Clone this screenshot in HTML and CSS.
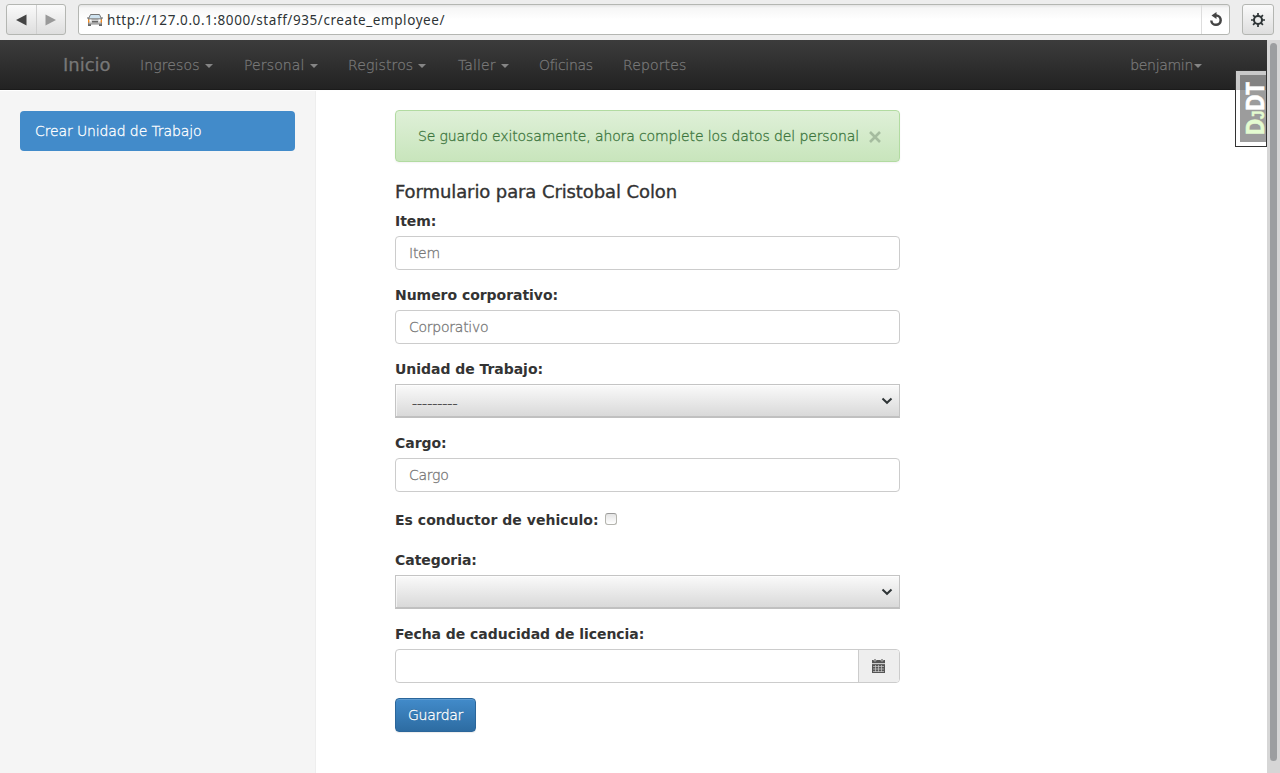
FILE: index.html
```html
<!DOCTYPE html>
<html lang="es">
<head>
<meta charset="utf-8">
<title>Crear empleado</title>
<link rel="stylesheet" href="styles.css">
</head>
<body>
<header class="toolbar">
  <div class="history">
    <span class="hist-btn"><svg width="14" height="14" viewBox="0 0 14 14"><path d="M12.500 1.500v11L2 7z" fill="#444"/></svg></span>
    <span class="hist-btn next"><svg width="14" height="14" viewBox="0 0 14 14"><path d="M1.500 1.500v11L12 7z" fill="#999"/></svg></span>
  </div>
  <div class="address">
    <svg class="car" width="16" height="14" viewBox="0 0 16 14"><path d="M3.500 1.500h9L14.500 6H1.500z" fill="#cfe3f0" stroke="#777"/><path d="M0 4.500h2v1H0zM14 4.500h2v1h-2zM1 10h3v3H1zM12 10h3v3h-3z" fill="#666"/><path d="M1.500 6h13v5h-13z" fill="#ccc" stroke="#888"/><path d="M5 8h6v1.500H5z" fill="#666"/><path d="M1 6.500h1.500v3H1zM13.500 6.500H15v3h-1.500z" fill="#f58b1e"/><path d="M2.500 6.500H4.500v2H2.500zM11.500 6.500h2v2h-2z" fill="#fff"/></svg>
    <span class="url">http://127.0.0.1:8000/staff/935/create_employee/</span>
    <span class="reload"><svg width="14" height="15" viewBox="0 0 14 15"><path d="M6 3.500H7.500a4.700 4.700 0 1 1-5.200 5" fill="none" stroke="#444" stroke-width="2.500"/><path d="M7.500 0v7L2.500 3.500z" fill="#444"/></svg></span>
  </div>
  <div class="gear"><svg width="14" height="14" viewBox="0 0 14 14"><circle cx="7" cy="7" r="4" fill="none" stroke="#2e3436" stroke-width="2"/><path d="M7 0v3M7 11v3M0 7h3M11 7h3M2.050 2.050l2 2M9.950 9.950l2 2M2.050 11.950l2-2M9.950 4.050l2-2" stroke="#2e3436" stroke-width="1.700"/></svg></div>
</header>
<div class="viewport">
  <div class="page">
    <nav class="navbar">
      <a class="brand">Inicio</a>
      <a class="nav-item wide"><span class="loose">Ingresos</span><i class="caret"></i></a>
      <a class="nav-item wide"><span class="loose">Personal</span><i class="caret"></i></a>
      <a class="nav-item wider"><span class="loose">Registros</span><i class="caret"></i></a>
      <a class="nav-item small"><span class="loose">Taller</span><i class="caret"></i></a>
      <a class="nav-item office"><span class="narrow">Oficinas</span></a>
      <a class="nav-item"><span class="loose">Reportes</span></a>
      <a class="nav-item user"><span class="narrow">benjamin</span><i class="caret tight"></i></a>
    </nav>
    <div class="columns">
      <aside class="sidebar"><a class="side-link"><span>Crear Unidad de Trabajo</span></a></aside>
      <main class="main">
        <div class="alert"><span class="alert-text">Se guardo exitosamente, ahora complete los datos del personal</span><svg class="close" width="12" height="12" viewBox="0 0 12 12"><path d="M1 1l10 10M11 1L1 11" stroke="#a5bc9f" stroke-width="2.600"/></svg></div>
        <h4 class="title">Formulario para Cristobal Colon</h4>
        <div class="group"><label>Item:</label><div class="control">Item</div></div>
        <div class="group"><label>Numero corporativo:</label><div class="control">Corporativo</div></div>
        <div class="group"><label>Unidad de Trabajo:</label><div class="select"><span class="dashes">---------</span><svg class="chev" width="12" height="8" viewBox="0 0 12 8"><path d="M1.500 1.500L6 5.800l4.500-4.300" fill="none" stroke="#2e3436" stroke-width="2"/></svg></div></div>
        <div class="group"><label>Cargo:</label><div class="control">Cargo</div></div>
        <div class="check-row"><label>Es conductor de vehiculo:</label><span class="checkbox"></span></div>
        <div class="group"><label>Categoria:</label><div class="select"><span class="dashes"></span><svg class="chev" width="12" height="8" viewBox="0 0 12 8"><path d="M1.500 1.500L6 5.800l4.500-4.300" fill="none" stroke="#2e3436" stroke-width="2"/></svg></div></div>
        <div class="group"><label>Fecha de caducidad de licencia:</label><div class="control date"><span class="addon"><svg width="13" height="14" viewBox="0 0 13 14"><path d="M0 1h13v3.500H0zM0 5h13v9H0z" fill="#555"/><path d="M2 0h2v2H2zM9 0h2v2H9z" fill="#555" stroke="#eee" stroke-width=".5"/><path d="M1 7.500h11M1 10h11M1 12.500h11M3.500 6v7M6.500 6v7M9.500 6v7" stroke="#ccc" stroke-width=".7"/><path d="M0 4.700h13" stroke="#eee" stroke-width=".7"/></svg></span></div></div>
        <button class="save">Guardar</button>
      </main>
    </div>
    <div class="djdt"><div class="djdt-panel"><span class="djdt-text"><span class="dj">D<small>J</small></span>DT</span></div></div>
  </div>
  <div class="scrollbar"><div class="thumb"></div></div>
</div>
</body>
</html>
```
FILE: styles.css
```css
* { box-sizing: border-box; }
body { margin: 0; height: 773px; overflow: hidden; background: #fff; color: #333; font: 200 14px/20px "DejaVu Sans Light", "DejaVu Sans", sans-serif; letter-spacing: -.12px; -webkit-text-stroke: .3px; }
svg { display: block; flex: none; }
.toolbar { height: 40px; background: #ededed; display: flex; padding: 4px 6px 5px; -webkit-text-stroke: 0; }
.history { width: 60px; height: 31px; border: 1px solid #b4b6b2; border-radius: 3px; background: linear-gradient(#fafafa, #dedede); display: flex; }
.hist-btn { flex: 1; display: flex; align-items: center; justify-content: center; }
.hist-btn.next { border-left: 1px solid #d0d0d0; }
.address { margin-left: 12px; width: 1152px; height: 31px; border: 1px solid #b4b6b2; border-radius: 3px; background: linear-gradient(#e4e4e4, #f6f6f6 3px, #fff 50%); display: flex; align-items: center; padding-left: 8px; }
.url { margin-left: 4px; font: 400 13.5px/20px "Noto Sans", sans-serif; letter-spacing: .57px; color: #2e3436; white-space: nowrap; }
.reload { margin-left: auto; width: 28px; height: 29px; border-left: 1px solid #ddd; display: flex; align-items: center; justify-content: center; }
.gear { margin-left: 12px; width: 32px; height: 31px; border: 1px solid #b4b6b2; border-radius: 3px; background: linear-gradient(#fafafa, #dedede); display: flex; align-items: center; justify-content: center; }
.viewport { display: flex; height: 733px; }
.page { width: 1267px; position: relative; }
.navbar { height: 50px; display: flex; align-items: center; background: linear-gradient(#3c3c3c, #222); border-bottom: 1px solid #1b1b1b; color: #777; text-shadow: 0 -1px 0 rgba(0,0,0,.25); padding-left: 63px; }
.brand { width: 62px; padding-top: 1px; font: 400 18px/20px "DejaVu Sans", sans-serif; letter-spacing: 0; -webkit-text-stroke: .3px; color: #777; }
.nav-item { padding-left: 15px; display: flex; align-items: center; white-space: nowrap; }
.loose { letter-spacing: .13px; }
.narrow { letter-spacing: -.3px; }
.wide { width: 104px; }
.wider { width: 110px; }
.small { width: 81px; }
.office { width: 84px; }
.user { margin-left: auto; margin-right: 65px; }
.caret { border: 4px solid transparent; border-top-color: #858585; border-bottom: 0; margin-left: 5px; margin-top: 2px; }
.caret.tight { margin-left: 1px; }
.columns { display: flex; height: 683px; padding-top: 1px; }
.sidebar { width: 316px; background: #f5f5f5; border-right: 1px solid #eee; padding: 20px 20px 0; }
.side-link { display: block; height: 40px; padding: 10px 15px; border-radius: 4px; background: #428bca; color: #fff; white-space: nowrap; }
.main { margin-left: 79px; width: 505px; padding-top: 19px; }
.alert { height: 52px; border: 1px solid #b2dba1; border-radius: 4px; background: linear-gradient(#dff0d8, #c8e5bc); box-shadow: 0 1px 2px rgba(0,0,0,.05); display: flex; align-items: center; padding: 0 18px 0 22px; color: #3c763d; white-space: nowrap; }
.close { margin: 2px 0 0 auto; }
.title { margin: 20px 0 9px; height: 20px; font: 400 18px/20px "DejaVu Sans", sans-serif; letter-spacing: -.1px; -webkit-text-stroke: .35px; white-space: nowrap; }
.group { margin-bottom: 15px; }
label { display: block; height: 20px; margin-bottom: 5px; font: 700 14px/20px "DejaVu Sans", sans-serif; letter-spacing: -.04px; -webkit-text-stroke: 0; white-space: nowrap; }
.control { height: 34px; border: 1px solid #ccc; border-radius: 4px; padding: 6px 12px 6px 13px; color: #777; letter-spacing: -.25px; }
.select { height: 34px; border: 1px solid #c4c4c4; border-bottom: 2px solid #c0c0c0; background: linear-gradient(#fafafa, #d9d9d9); box-shadow: inset 1px 1px 0 rgba(255,255,255,.6); display: flex; align-items: center; justify-content: space-between; padding: 0 6px 0 16px; }
.dashes { padding-top: 5px; letter-spacing: 0; }
.check-row { display: flex; height: 20px; margin: 18px 0 20px; }
.check-row label { margin: 0; width: 205px; letter-spacing: .02px; }
.checkbox { margin: 3px 0 0 5px; width: 12px; height: 12px; border: 1px solid #b4b4ae; border-top-color: #999; border-radius: 3px; background: linear-gradient(#e4e4e4, #fff); }
.date { padding: 0; display: flex; justify-content: flex-end; }
.addon { width: 41px; background: #eee; border-left: 1px solid #ccc; border-radius: 0 3px 3px 0; display: flex; align-items: center; padding-left: 13px; }
.save { display: block; width: 81px; height: 34px; padding: 0; border: 1px solid #2b669a; border-radius: 4px; background: linear-gradient(#428bca, #2d6ca2); color: #fff; font: inherit; letter-spacing: -.3px; text-shadow: 0 -1px 0 rgba(0,0,0,.2); box-shadow: inset 0 1px 0 rgba(255,255,255,.15), 0 1px 1px rgba(0,0,0,.075); }
.djdt { position: absolute; right: 0; top: 30px; width: 32px; height: 77px; border: 1px solid #333; background: rgba(255,255,255,.75); background-clip: padding-box; padding: 4px 0 4px 4px; }
.djdt-panel { width: 26px; height: 67px; background: rgba(75,75,75,.55); display: flex; align-items: center; justify-content: center; }
.djdt-text { flex: none; transform: translateX(1px) rotate(-90deg) scaleX(.92); font: 700 25px/26px "Open Sans", sans-serif; letter-spacing: -.8px; -webkit-text-stroke: .5px; color: #fff; }
.dj { color: #e4fbd0; }
.djdt small { font: 700 17px/17px "Liberation Sans", sans-serif; }
.scrollbar { width: 13px; background: #d6d6d6; padding: 3px; }
.thumb { width: 7px; height: 718px; border-radius: 4px; background: #9c9ea0; }
```
